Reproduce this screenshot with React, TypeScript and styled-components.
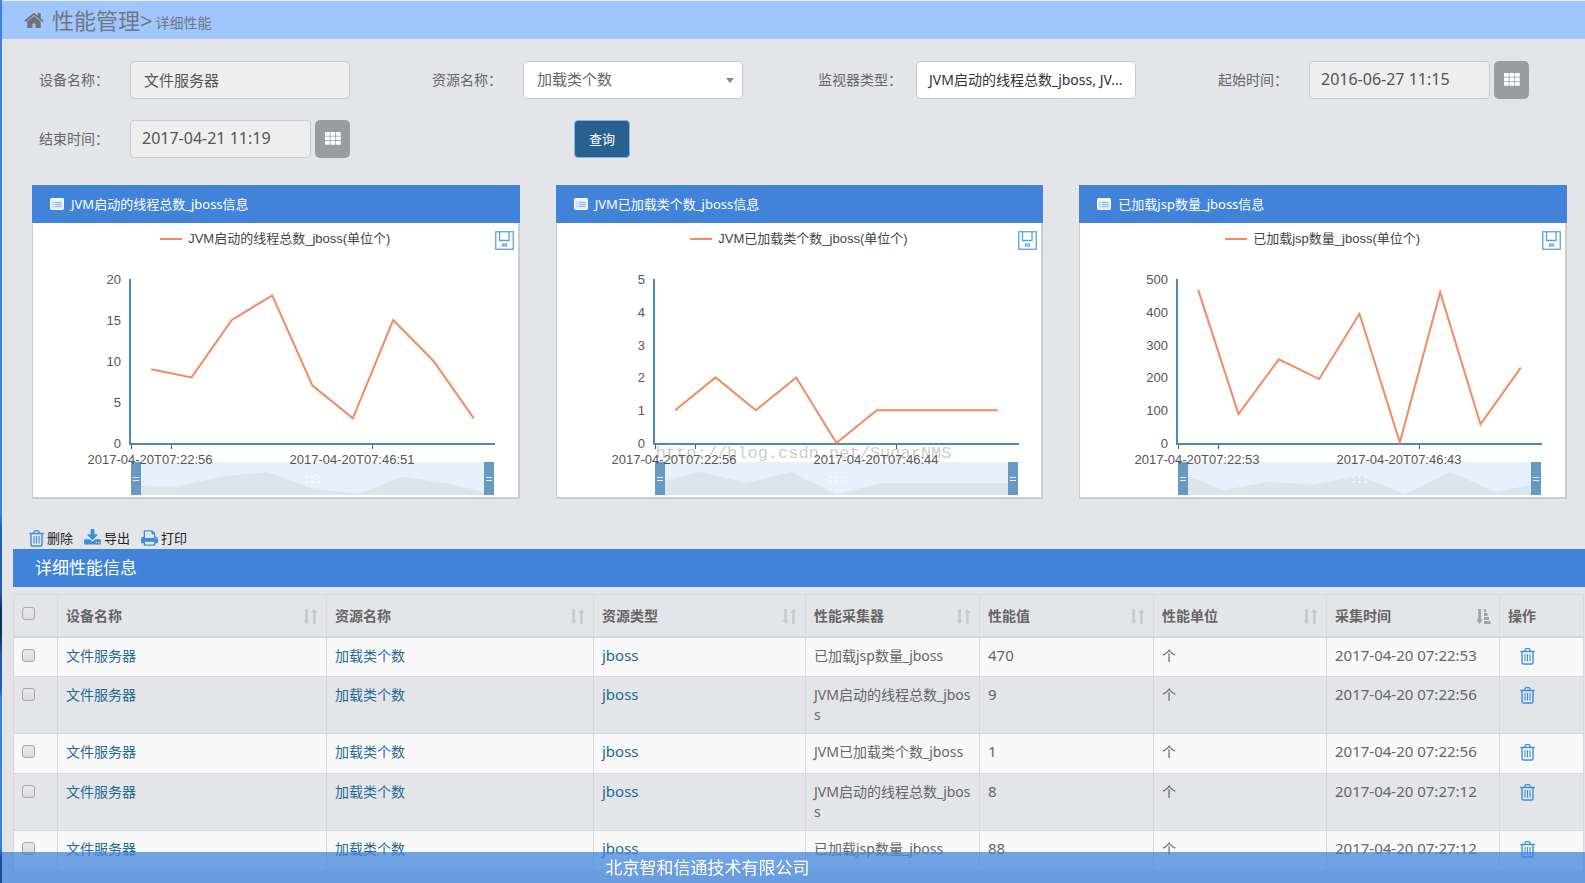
import React from "react";
import styled, { createGlobalStyle } from "styled-components";

const GlobalStyle = createGlobalStyle`
  * { box-sizing: border-box; }
  body {
    margin: 0;
    background: #e4e5e8;
    color: #666;
    font-family: "Noto Sans", "Noto Sans CJK SC", sans-serif;
    font-size: 14px;
    line-height: 20px;
  }
  button, input, select { font: inherit; margin: 0; }
  a { color: #1f6a92; text-decoration: none; }
`;

/* ---------- shell ---------- */

const Shell = styled.div`
  display: flex;
  height: 100vh;
  overflow: hidden;
`;

const Rail = styled.div`
  flex: 0 0 2px;
  background: linear-gradient(
    #3d82e2 0%, #3d82e2 58%, #1c64b8 60%, #1a5fb0 67%, #0c2f66 69%,
    #0c2f66 72%, #1a5fb0 74%, #1a5fb0 78%, #3d82e2 79%, #3d82e2 96%, #1d4f96 97%
  );
`;

const Page = styled.main`
  flex: 1;
  min-width: 0;
`;

const Crumbs = styled.header`
  display: flex;
  align-items: center;
  height: 39px;
  padding: 0 22px;
  border-top: 1px solid #e6f2fd;
  background: #a0c6fd;
  color: #70777f;
`;

const CrumbMain = styled.h1`
  margin: 0 0 0 8px;
  font-size: 22px;
  font-weight: 400;
  line-height: 38px;
`;

const CrumbSub = styled.span`
  padding: 5px 0 0 3px;
`;

/* ---------- filter form ---------- */

const Filters = styled.form`
  display: grid;
  grid-template-columns: 393fr 393fr 393fr 388fr;
  row-gap: 21px;
  padding: 22px 0 27px 16px;
`;

const Field = styled.div`
  display: flex;
  align-items: center;
`;

const FieldLabel = styled.label`
  flex: 0 0 112px;
  text-align: center;
`;

const Control = styled.div`
  position: relative;
  display: flex;
  gap: 4px;
  width: 220px;
`;

const TextInput = styled.input<{ $date?: boolean }>`
  flex: 1;
  min-width: 0;
  height: 38px;
  padding: 0 ${(p) => (p.$date ? 11 : 13)}px 2px;
  border: 1px solid #c9cbce;
  border-radius: 4px;
  background: #eee;
  color: #555;
  font-size: ${(p) => (p.$date ? 16 : 15)}px;
  outline: 0;
`;

const DateButton = styled.button`
  display: flex;
  align-items: center;
  justify-content: center;
  width: 35px;
  height: 38px;
  padding: 0 0 2px;
  border: 0;
  border-radius: 5px;
  background: #999d9f;
  color: #fff;
`;

const Select = styled.select`
  flex: 1;
  height: 38px;
  padding: 0 13px 2px;
  border: 1px solid #c9cbce;
  border-radius: 4px;
  background: #fff;
  color: #666;
  font-size: 15px;
  appearance: none;
`;

const Caret = styled.span`
  position: absolute;
  top: 17px;
  right: 9px;
  border: 4px solid transparent;
  border-top: 5px solid #888;
  border-bottom: 0;
  pointer-events: none;
`;

const MultiButton = styled.button`
  flex: 1;
  height: 38px;
  padding: 0 12px;
  border: 1px solid #c9cbce;
  border-radius: 4px;
  background: #fff;
  color: #333;
  font-size: 14px;
  text-align: left;
  white-space: nowrap;
  overflow: hidden;
`;

const SearchButton = styled.button`
  width: 56px;
  height: 38px;
  margin-left: 163px;
  padding: 0;
  border: 1px solid #8ab4ee;
  border-radius: 4px;
  background: #286090;
  color: #fff;
  font-size: 13px;
`;

/* ---------- chart cards ---------- */

const Cards = styled.section`
  display: grid;
  grid-template-columns: repeat(3, 1fr);
  gap: 36px;
  padding: 0 18px 0 30px;
`;

const Card = styled.article`
  position: relative;
  background: #fff;
  border: 1px solid #cbcccf;
  border-width: 0 2px 2px 1px;
`;

const CardTitle = styled.h2`
  display: flex;
  align-items: center;
  gap: 7px;
  height: 38px;
  margin: 0 -2px 0 -1px;
  padding: 0 18px;
  background: #4283da;
  color: #fff;
  font-size: 13px;
  font-weight: 400;
`;

const Legend = styled.div`
  display: flex;
  align-items: center;
  justify-content: center;
  gap: 6px;
  height: 32px;
  color: #444;
  font-family: "Liberation Sans", "Noto Sans CJK SC", sans-serif;
  font-size: 13px;
`;

const LegendMark = styled.span`
  width: 22px;
  height: 2px;
  background: #f28a62;
`;

const SaveButton = styled.button`
  position: absolute;
  top: 46px;
  right: 4px;
  display: flex;
  padding: 0;
  border: 0;
  background: none;
`;

const Plot = styled.svg`
  display: block;
  width: 100%;
  height: 242px;
  font-family: "Liberation Sans", sans-serif;
  font-size: 13px;
  fill: #555;
`;

const Watermark = styled.div`
  position: absolute;
  top: 259px;
  left: 99px;
  color: rgba(120, 120, 120, 0.4);
  font-family: "Liberation Mono", monospace;
  font-size: 17px;
  white-space: nowrap;
  pointer-events: none;
`;

/* ---------- table ---------- */

const Toolbar = styled.div`
  display: flex;
  gap: 11px;
  padding: 29px 0 1px 27px;
`;

const ToolButton = styled.button`
  display: flex;
  align-items: center;
  gap: 3px;
  height: 20px;
  padding: 0;
  border: 0;
  background: none;
  color: #222;
  font-size: 13px;
`;

const Section = styled.section`
  margin-left: 11px;
`;

const SectionTitle = styled.h2`
  height: 38px;
  margin: 0;
  padding: 0 22px;
  background: #4283da;
  color: #fff;
  font-size: 17px;
  font-weight: 400;
  line-height: 37px;
`;

const TableWrap = styled.div`
  padding: 7px 1px 0 0;
`;

const Table = styled.table`
  width: 100%;
  table-layout: fixed;
  border-collapse: collapse;
`;

const Th = styled.th`
  height: 42px;
  padding: 2px 8px 0;
  border: 1px solid #dadbde;
  border-bottom: 2px solid #d6d7d9;
  text-align: left;
  font-weight: 700;
`;

const ThInner = styled.div`
  display: flex;
  align-items: center;
  justify-content: space-between;
`;

const Tr = styled.tr`
  &:nth-child(odd) { background: #f9f9f9; }
`;

const Td = styled.td<{ $latin?: boolean }>`
  height: 40px;
  padding: ${(p) => (p.$latin ? "7px 6px 9px 8px" : "8px 6px 8px 8px")};
  border: 1px solid #d8d9dc;
  vertical-align: top;
  word-break: break-all;
  font-size: ${(p) => (p.$latin ? 15 : 14)}px;
`;

const Check = styled.input`
  display: block;
  width: 13px;
  height: 13px;
  margin: 3px 0 0;
  border: 1px solid #a8a8a8;
  border-radius: 3px;
  background: linear-gradient(#e9e9e9, #dcdcdc);
  appearance: none;
`;

const HeadCheck = styled(Check)`
  margin: 0 0 6px;
`;

const IconButton = styled.button`
  display: flex;
  margin: 2px 0 0 12px;
  padding: 0;
  border: 0;
  background: none;
`;

const Footer = styled.footer`
  position: fixed;
  left: 2px;
  right: 0;
  bottom: 0;
  height: 31px;
  padding-right: 172px;
  background: rgba(65, 131, 220, 0.74);
  color: #fff;
  font-size: 17px;
  line-height: 32px;
  text-align: center;
`;

/* ---------- icons ---------- */

const HomeIcon = () => (
  <svg width="20" height="21" viewBox="0 0 1664 1792" fill="#6f7378" aria-hidden="true">
    <path d="M1408 992v480q0 26-19 45t-45 19h-384v-384h-256v384h-384q-26 0-45-19t-19-45v-480q0-1 .5-3t.5-3l575-474 575 474q1 2 1 6zm223-69l-62 74q-8 9-21 11h-3q-13 0-21-7l-692-577-692 577q-12 8-24 7-13-2-21-11l-62-74q-8-10-7-23.5t11-21.5l719-599q32-26 76-26t76 26l244 204v-195q0-14 9-23t23-9h192q14 0 23 9t9 23v408l219 182q10 8 11 21.5t-7 23.5z" />
  </svg>
);

const DownloadIcon = () => (
  <svg width="17" height="18" viewBox="0 0 1664 1792" fill="#3b8ede" aria-hidden="true">
    <path d="M1280 1344q0-26-19-45t-45-19-45 19-19 45 19 45 45 19 45-19 19-45zm256 0q0-26-19-45t-45-19-45 19-19 45 19 45 45 19 45-19 19-45zm128-224v320q0 40-28 68t-68 28h-1472q-40 0-68-28t-28-68v-320q0-40 28-68t68-28h465l135 136q58 56 136 56t136-56l136-136h464q40 0 68 28t28 68zm-325-569q17 41-14 70l-448 448q-18 19-45 19t-45-19l-448-448q-31-29-14-70 17-39 59-39h256v-448q0-26 19-45t45-19h256q26 0 45 19t19 45v448h256q42 0 59 39z" />
  </svg>
);

const PrintIcon = () => (
  <svg width="17" height="18" viewBox="0 0 1664 1792" fill="#3b8ede" aria-hidden="true">
    <path d="M384 1536h896v-256h-896v256zm0-640h896v-384h-160q-40 0-68-28t-28-68v-160h-640v640zm1152 64q0-26-19-45t-45-19-45 19-19 45 19 45 45 19 45-19 19-45zm128 0v416q0 13-9.5 22.5t-22.5 9.5h-224v160q0 40-28 68t-68 28h-960q-40 0-68-28t-28-68v-160h-224q-13 0-22.5-9.5t-9.5-22.5v-416q0-79 56.5-135.5t135.5-56.5h64v-544q0-40 28-68t68-28h672q40 0 88 20t76 48l152 152q28 28 48 76t20 88v256h64q79 0 135.5 56.5t56.5 135.5z" />
  </svg>
);

const TrashIcon = () => (
  <svg width="15" height="17" viewBox="0 0 15 17" fill="none" stroke="#3b8ede" aria-hidden="true">
    <path d="M0.3 3.5h14.4M4.5 3.5l.8-2.200q.2-.6.8-.6h2.800q.6 0 .8.6l.8 2.200" strokeWidth="1.3" />
    <path d="M2 3.5v11q0 1.500 1.500 1.500h8q1.500 0 1.500-1.500v-11" strokeWidth="1.4" />
    <path d="M5 6v7.500M7.500 6v7.500M10 6v7.500" strokeWidth="1.1" />
  </svg>
);

const GridIcon = () => (
  <svg width="16" height="13" viewBox="0 0 16 13" fill="currentColor" aria-hidden="true">
    {[0, 4.5, 9].map((y) =>
      [0, 5.5, 11].map((x) => <rect key={`${x}-${y}`} x={x} y={y} width="4.8" height="3.8" rx=".4" />)
    )}
  </svg>
);

const ListIcon = () => (
  <svg width="14" height="12" viewBox="0 0 14 12" aria-hidden="true">
    <rect x=".5" y=".5" width="13" height="11" rx="1" fill="#dfeafa" stroke="#fff" />
    <path d="M1 1.500h12" stroke="#fff" strokeWidth="2" />
    <path d="M2.500 4.500h1M5 4.500h6.500M2.500 6.500h1M5 6.500h6.500M2.500 8.500h1M5 8.500h6.500" stroke="#8fb5e8" />
  </svg>
);

const SaveIcon = () => (
  <svg width="19" height="19" viewBox="0 0 19 19" fill="none" stroke="#55a3e6" aria-hidden="true">
    <rect x=".75" y=".75" width="17.500" height="17.500" strokeWidth="1.300" />
    <path d="M4.500 1v8.500h9.500v-8.500" strokeWidth="1.300" />
    <rect x="7.500" y="13" width="4" height="2" strokeWidth="1.200" />
  </svg>
);

const SortIcon = ({ active }: { active?: boolean }) =>
  active ? (
    <svg width="15" height="15" viewBox="0 0 15 15" fill="#a3a4a6" aria-hidden="true">
      <path d="M2.200 0h2.800v10.500h2l-3.400 4.500-3.400-4.500h2z" />
      <path d="M8 0h2v3h-2zM8 4h3.500v3h-3.500zM8 8h5v3h-5zM8 12h6.500v3h-6.500z" />
    </svg>
  ) : (
    <svg width="15" height="15" viewBox="0 0 15 15" fill="#c9cacc" aria-hidden="true">
      <path d="M2.300 0h2.600v11h2.100l-3.400 4-3.400-4h2.100zM10.100 15h2.600v-11h2.100l-3.400-4-3.400 4h2.100z" />
    </svg>
  );

/* ---------- chart ---------- */

type Series = {
  name: string;
  legend: string;
  max: number;
  step: number;
  values: number[];
  ticks: [string, string];
};

const LEFT = 98;
const RIGHT = 461;
const BASE = 189;
const TOP = 25;

function Chart({ series }: { series: Series }) {
  const { values, max, step, ticks } = series;
  const band = (RIGHT - LEFT) / values.length;
  const line = values
    .map((v, i) => `${LEFT + band * (i + 0.5)},${BASE - 1 - (v / max) * (BASE - TOP)}`)
    .join(" ");
  const low = Math.min(...values);
  const high = Math.max(...values);
  const gap = (RIGHT - LEFT) / (values.length - 1);
  const shadow = values
    .map((v, i) => `${LEFT + gap * i},${239 - ((v - low) / (high - low)) * 22}`)
    .join(" ");
  const labels = Array.from({ length: max / step + 1 }, (_, i) => i * step);
  const middle = (LEFT + RIGHT) / 2;

  return (
    <Plot viewBox="0 0 484 242" preserveAspectRatio="xMinYMin meet">
      {labels.map((v) => (
        <text key={v} x="88" y={BASE + 4 - (v / max) * (BASE - TOP)} textAnchor="end">
          {v}
        </text>
      ))}
      <rect x={LEFT} y="207" width={RIGHT - LEFT} height="33" fill="#e6f1fb" />
      <polygon points={`${LEFT},240 ${shadow} ${RIGHT},240`} fill="#dae5ee" />
      {[-6, 0, 6].map((dx) =>
        [222, 227].map((y) => <circle key={`${dx}-${y}`} cx={middle + dx} cy={y} r="1" fill="#fff" />)
      )}
      {[LEFT, RIGHT - 10].map((x) => (
        <g key={x}>
          <rect x={x} y="207" width="10" height="33" fill="#6899c2" />
          <path d={`M${x + 2} 222.500h6M${x + 2} 225.500h6`} stroke="#e6f1fb" />
        </g>
      ))}
      <path d={`M97 24V${BASE}H${RIGHT + 1}`} fill="none" stroke="#4a8ab8" strokeWidth="2" />
      <path d={`M98.500 190v4M138.500 190v4M339.500 190v4`} stroke="#555" />
      <text x="117" y="209" textAnchor="middle">{ticks[0]}</text>
      <text x="319" y="209" textAnchor="middle">{ticks[1]}</text>
      <polyline points={line} fill="none" stroke="#f28a62" strokeWidth="2" />
    </Plot>
  );
}

/* ---------- data ---------- */

const charts: Series[] = [
  {
    name: "JVM启动的线程总数_jboss信息",
    legend: "JVM启动的线程总数_jboss(单位个)",
    max: 20,
    step: 5,
    values: [9, 8, 15, 18, 7, 3, 15, 10, 3],
    ticks: ["2017-04-20T07:22:56", "2017-04-20T07:46:51"],
  },
  {
    name: "JVM已加载类个数_jboss信息",
    legend: "JVM已加载类个数_jboss(单位个)",
    max: 5,
    step: 1,
    values: [1, 2, 1, 2, 0, 1, 1, 1, 1],
    ticks: ["2017-04-20T07:22:56", "2017-04-20T07:46:44"],
  },
  {
    name: "已加载jsp数量_jboss信息",
    legend: "已加载jsp数量_jboss(单位个)",
    max: 500,
    step: 100,
    values: [467, 88, 255, 195, 394, 2, 460, 57, 230],
    ticks: ["2017-04-20T07:22:53", "2017-04-20T07:46:43"],
  },
];

const columns = [
  { title: "设备名称", width: 269 },
  { title: "资源名称", width: 267 },
  { title: "资源类型", width: 212 },
  { title: "性能采集器", width: 174 },
  { title: "性能值", width: 174 },
  { title: "性能单位", width: 173 },
  { title: "采集时间", width: 173, active: true },
];

const rows = [
  { collector: "已加载jsp数量_jboss", value: 470, time: "2017-04-20 07:22:53" },
  { collector: "JVM启动的线程总数_jboss", value: 9, time: "2017-04-20 07:22:56" },
  { collector: "JVM已加载类个数_jboss", value: 1, time: "2017-04-20 07:22:56" },
  { collector: "JVM启动的线程总数_jboss", value: 8, time: "2017-04-20 07:27:12" },
  { collector: "已加载jsp数量_jboss", value: 88, time: "2017-04-20 07:27:12" },
];

export default function App() {
  return (
    <>
      <GlobalStyle />
      <Shell>
        <Rail />
        <Page>
          <Crumbs>
            <HomeIcon />
            <CrumbMain>性能管理&gt;</CrumbMain>
            <CrumbSub>详细性能</CrumbSub>
          </Crumbs>

          <Filters onSubmit={(e) => e.preventDefault()}>
            <Field>
              <FieldLabel htmlFor="device">设备名称：</FieldLabel>
              <Control>
                <TextInput id="device" readOnly defaultValue="文件服务器" />
              </Control>
            </Field>
            <Field>
              <FieldLabel htmlFor="resource">资源名称：</FieldLabel>
              <Control>
                <Select id="resource">
                  <option>加载类个数</option>
                </Select>
                <Caret />
              </Control>
            </Field>
            <Field>
              <FieldLabel htmlFor="monitor">监视器类型：</FieldLabel>
              <Control>
                <MultiButton id="monitor" type="button">
                  JVM启动的线程总数_jboss, JV...
                </MultiButton>
              </Control>
            </Field>
            <Field>
              <FieldLabel htmlFor="start">起始时间：</FieldLabel>
              <Control>
                <TextInput id="start" $date readOnly defaultValue="2016-06-27 11:15" />
                <DateButton type="button" aria-label="选择起始时间">
                  <GridIcon />
                </DateButton>
              </Control>
            </Field>
            <Field>
              <FieldLabel htmlFor="end">结束时间：</FieldLabel>
              <Control>
                <TextInput id="end" $date readOnly defaultValue="2017-04-21 11:19" />
                <DateButton type="button" aria-label="选择结束时间">
                  <GridIcon />
                </DateButton>
              </Control>
            </Field>
            <Field>
              <SearchButton type="submit">查询</SearchButton>
            </Field>
          </Filters>

          <Cards>
            {charts.map((c, i) => (
              <Card key={c.name}>
                <CardTitle>
                  <ListIcon />
                  {c.name}
                </CardTitle>
                <Legend>
                  <LegendMark />
                  {c.legend}
                </Legend>
                <SaveButton type="button" aria-label="保存为图片">
                  <SaveIcon />
                </SaveButton>
                <Chart series={c} />
                {i === 1 && <Watermark>http://blog.csdn.net/SugarNMS</Watermark>}
              </Card>
            ))}
          </Cards>

          <Toolbar>
            <ToolButton type="button">
              <TrashIcon />
              删除
            </ToolButton>
            <ToolButton type="button">
              <DownloadIcon />
              导出
            </ToolButton>
            <ToolButton type="button">
              <PrintIcon />
              打印
            </ToolButton>
          </Toolbar>

          <Section>
            <SectionTitle>详细性能信息</SectionTitle>
            <TableWrap>
              <Table>
                <colgroup>
                  <col width="44" />
                  {columns.map((c) => (
                    <col key={c.title} width={c.width} />
                  ))}
                  <col width="84" />
                </colgroup>
                <thead>
                  <tr>
                    <Th>
                      <HeadCheck type="checkbox" aria-label="全选" />
                    </Th>
                    {columns.map((c) => (
                      <Th key={c.title}>
                        <ThInner>
                          {c.title}
                          <SortIcon active={c.active} />
                        </ThInner>
                      </Th>
                    ))}
                    <Th>操作</Th>
                  </tr>
                </thead>
                <tbody>
                  {rows.map((r, i) => (
                    <Tr key={i}>
                      <Td>
                        <Check type="checkbox" aria-label="选择此行" />
                      </Td>
                      <Td>
                        <a href="#device">文件服务器</a>
                      </Td>
                      <Td>
                        <a href="#resource">加载类个数</a>
                      </Td>
                      <Td $latin>
                        <a href="#type">jboss</a>
                      </Td>
                      <Td>{r.collector}</Td>
                      <Td $latin>{r.value}</Td>
                      <Td>个</Td>
                      <Td $latin>{r.time}</Td>
                      <Td>
                        <IconButton type="button" aria-label="删除">
                          <TrashIcon />
                        </IconButton>
                      </Td>
                    </Tr>
                  ))}
                </tbody>
              </Table>
            </TableWrap>
          </Section>
        </Page>
      </Shell>
      <Footer>北京智和信通技术有限公司</Footer>
    </>
  );
}
